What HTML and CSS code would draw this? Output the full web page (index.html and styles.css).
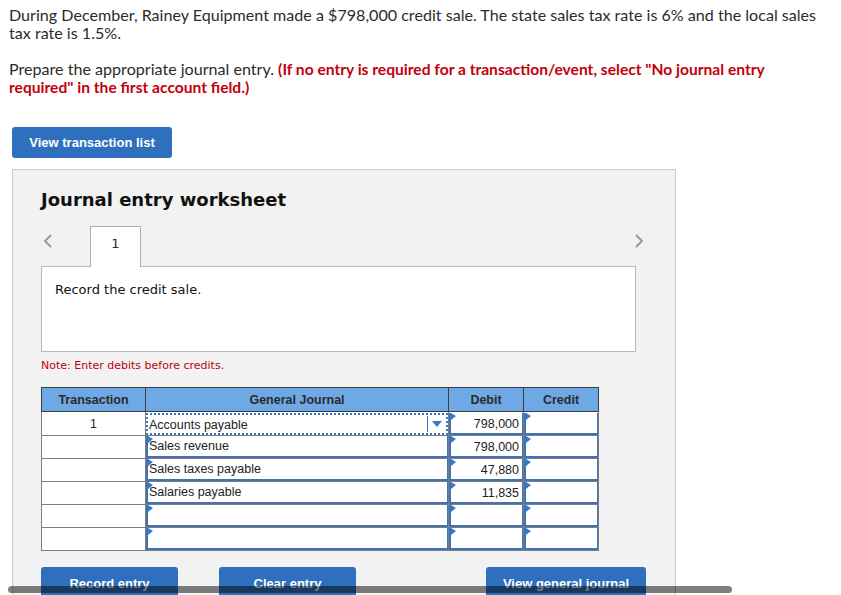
FILE: index.html
```html
<!DOCTYPE html>
<html lang="en">
<head>
<meta charset="utf-8">
<title>Journal entry worksheet</title>
<link rel="stylesheet" href="styles.css">
</head>
<body>
<p class="q">During December, Rainey Equipment made a $798,000 credit sale. The state sales tax rate is 6% and the local sales tax rate is 1.5%.</p>
<p class="q">Prepare the appropriate journal entry. <strong class="warn">(If no entry is required for a transaction/event, select "No journal entry required" in the first account field.)</strong></p>
<button class="btn btn-list" type="button">View transaction list</button>
<section class="ws">
  <h2 class="ws-title">Journal entry worksheet</h2>
  <div class="tabs">
    <svg class="nav-arrow" width="10" height="14" viewBox="0 0 10 14"><path d="M8 1 L2 7 L8 13" fill="none" stroke="#9a9a9a" stroke-width="2"/></svg>
    <div class="tab">1</div>
    <svg class="nav-arrow nav-right" width="10" height="14" viewBox="0 0 10 14"><path d="M2 1 L8 7 L2 13" fill="none" stroke="#9a9a9a" stroke-width="2"/></svg>
  </div>
  <div class="desc">Record the credit sale.</div>
  <p class="note">Note: Enter debits before credits.</p>
  <table class="jt">
    <thead>
      <tr><th class="c-tr">Transaction</th><th class="c-gj">General Journal</th><th class="c-amt">Debit</th><th class="c-amt">Credit</th></tr>
    </thead>
    <tbody>
      <tr class="first">
        <td class="tr-num">1</td>
        <td><div class="sel">Accounts payable<span class="sel-btn"><svg width="10" height="6" viewBox="0 0 10 6"><path d="M0 0 H10 L5 6 Z" fill="#3a78c9"/></svg></span></div></td>
        <td><div class="in num">798,000</div></td>
        <td><div class="in num"></div></td>
      </tr>
      <tr>
        <td></td>
        <td><div class="in">Sales revenue</div></td>
        <td><div class="in num">798,000</div></td>
        <td><div class="in num"></div></td>
      </tr>
      <tr>
        <td></td>
        <td><div class="in">Sales taxes payable</div></td>
        <td><div class="in num">47,880</div></td>
        <td><div class="in num"></div></td>
      </tr>
      <tr>
        <td></td>
        <td><div class="in">Salaries payable</div></td>
        <td><div class="in num">11,835</div></td>
        <td><div class="in num"></div></td>
      </tr>
      <tr>
        <td></td>
        <td><div class="in"></div></td>
        <td><div class="in num"></div></td>
        <td><div class="in num"></div></td>
      </tr>
      <tr>
        <td></td>
        <td><div class="in"></div></td>
        <td><div class="in num"></div></td>
        <td><div class="in num"></div></td>
      </tr>
    </tbody>
  </table>
  <div class="actions">
    <button class="btn btn-act" type="button">Record entry</button>
    <button class="btn btn-act" type="button">Clear entry</button>
    <button class="btn btn-act btn-view" type="button">View general journal</button>
  </div>
</section>
<div class="hscroll"></div>
</body>
</html>
```
FILE: styles.css
```css
html, body {
  margin: 0;
  padding: 0;
  background: #fff;
  overflow: hidden;
}
body {
  padding: 6px 9px 0 9px;
  font-family: "Lato", "Open Sans", sans-serif;
  color: #2b2b2b;
}
.q {
  margin: 0 0 18px 0;
  font-size: 16.1px;
  line-height: 18px;
  width: 812px;
}
.warn {
  color: #c2000b;
  font-weight: 700;
  font-size: 15.6px;
}
.btn {
  border: none;
  border-radius: 3px;
  background: #2e70be;
  color: #fff;
  font-family: "Liberation Sans", Arial, sans-serif;
  font-weight: 700;
  font-size: 13px;
  cursor: pointer;
  padding: 0;
}
.btn-list {
  display: block;
  margin: 31px 0 0 3px;
  width: 160px;
  height: 31px;
}
.ws {
  margin: 11px 0 0 3px;
  width: 664px;
  height: 460px;
  border: 1px solid #c9c9c9;
  background: #f2f2f2;
  padding: 19px 0 0 28px;
  box-sizing: border-box;
}
.ws-title {
  margin: 0;
  font-family: "DejaVu Sans", Verdana, sans-serif;
  font-weight: 700;
  font-size: 18px;
  line-height: 22px;
  color: #111;
}
.tabs {
  display: flex;
  align-items: flex-start;
  margin-top: 15px;
  width: 603px;
  position: relative;
  z-index: 1;
}
.nav-arrow {
  margin: 8px 0 0 2px;
}
.nav-right {
  margin-left: auto;
}
.tab {
  margin-left: 37px;
  width: 51px;
  height: 41px;
  background: #fff;
  border: 1px solid #b0b0b0;
  border-bottom: none;
  font-family: "DejaVu Sans", Verdana, sans-serif;
  font-size: 13px;
  line-height: 16px;
  text-align: center;
  padding-top: 9px;
  box-sizing: border-box;
}
.desc {
  margin-top: -1px;
  width: 595px;
  height: 86px;
  box-sizing: border-box;
  background: #fff;
  border: 1px solid #b8b8b8;
  padding: 15px 0 0 13px;
  font-family: "DejaVu Sans", Verdana, sans-serif;
  font-size: 13px;
  line-height: 16px;
  color: #111;
}
.note {
  margin: 6px 0 0 0;
  font-family: "DejaVu Sans", Verdana, sans-serif;
  font-size: 11px;
  line-height: 16px;
  color: #c2000b;
}
.jt {
  margin-top: 13px;
  border-collapse: collapse;
  table-layout: fixed;
  width: 558px;
  font-family: "Liberation Sans", Arial, sans-serif;
  font-size: 12px;
  color: #222;
}
.jt th {
  background: #6fa9e5;
  border: 1px solid #3d3d3d;
  height: 24px;
  padding: 0;
  font-weight: 700;
  font-size: 12.5px;
  color: #2a2a2a;
  box-sizing: border-box;
}
.c-tr { width: 104px; }
.c-gj { width: 303px; }
.c-amt { width: 75px; }
.jt td {
  border: 1px solid #7d7d7d;
  background: #fff;
  height: 23px;
  padding: 0;
  box-sizing: border-box;
}
.jt tr.first td {
  height: 24px;
}
.tr-num {
  text-align: center;
  font-size: 12.5px;
}
.in {
  position: relative;
  height: 22px;
  box-sizing: border-box;
  border-left: 2px solid #3f73b5;
  border-bottom: 2px solid #3f73b5;
  border-right: 1px solid #3f73b5;
  padding: 3px 0 0 1px;
  font-size: 12.5px;
  line-height: 15px;
  white-space: nowrap;
}
.in::before {
  content: "";
  position: absolute;
  left: 0;
  top: 0;
  border-left: 5px solid #2f7ad6;
  border-top: 3px solid transparent;
  border-bottom: 4px solid transparent;
}
.num {
  text-align: right;
  padding: 4px 3px 0 0;
}
.sel {
  position: relative;
  height: 22px;
  box-sizing: border-box;
  border: 2px dotted #3e76c0;
  padding: 3px 0 0 1px;
  font-size: 12.5px;
  line-height: 15px;
}
.sel-btn {
  position: absolute;
  right: 0;
  top: 1px;
  width: 18px;
  height: 16px;
  border-left: 1px solid #3e76c0;
  display: flex;
  align-items: center;
  justify-content: center;
}
.actions {
  display: flex;
  margin-top: 16px;
}
.btn-act {
  width: 137px;
  height: 32px;
}
.btn-act + .btn-act {
  margin-left: 41px;
}
.btn-act.btn-view {
  margin-left: 130px;
  width: 160px;
}
.hscroll {
  position: fixed;
  left: 8px;
  top: 586px;
  width: 724px;
  height: 7px;
  border-radius: 4px;
  background: rgba(0, 0, 0, 0.5);
}
```
